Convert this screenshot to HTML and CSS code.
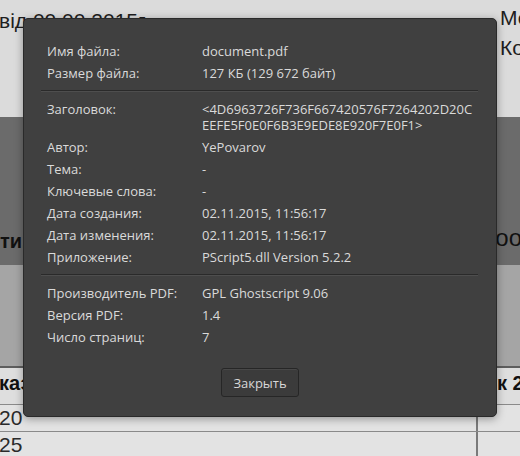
FILE: index.html
```html
<!DOCTYPE html>
<html lang="ru">
<head>
<meta charset="utf-8">
<title>Свойства документа</title>
<link rel="stylesheet" href="styles.css">
</head>
<body>
<div class="page">
  <div class="top">
    <div class="date">від 00.00.2015г.</div>
    <div class="topright"><div>Мо</div><div>Ко</div></div>
  </div>
  <div class="band">
    <span class="band-left">ти,</span>
    <span class="band-right">оо</span>
  </div>
  <div class="mid"></div>
  <div class="table">
    <div class="trow head"><div class="c1">каз</div><div class="c2">к 2</div></div>
    <div class="trow"><div class="c1">20</div><div class="c2"></div></div>
    <div class="trow"><div class="c1">25</div><div class="c2"></div></div>
  </div>
</div>

<div class="dialog">
  <div class="group">
    <div class="lbl">Имя файла:</div><div class="val">document.pdf</div>
    <div class="lbl">Размер файла:</div><div class="val">127 КБ (129 672 байт)</div>
  </div>
  <div class="sep"></div>
  <div class="group">
    <div class="lbl">Заголовок:</div><div class="val">&lt;4D6963726F736F667420576F7264202D20C<br>EEFE5F0E0F6B3E9EDE8E920F7E0F1&gt;</div>
    <div class="lbl">Автор:</div><div class="val">YePovarov</div>
    <div class="lbl">Тема:</div><div class="val">-</div>
    <div class="lbl">Ключевые слова:</div><div class="val">-</div>
    <div class="lbl">Дата создания:</div><div class="val">02.11.2015, 11:56:17</div>
    <div class="lbl">Дата изменения:</div><div class="val">02.11.2015, 11:56:17</div>
    <div class="lbl">Приложение:</div><div class="val">PScript5.dll Version 5.2.2</div>
  </div>
  <div class="sep"></div>
  <div class="group">
    <div class="lbl">Производитель PDF:</div><div class="val">GPL Ghostscript 9.06</div>
    <div class="lbl">Версия PDF:</div><div class="val">1.4</div>
    <div class="lbl">Число страниц:</div><div class="val">7</div>
  </div>
  <div class="actions"><button class="btn" type="button">Закрыть</button></div>
</div>
</body>
</html>
```
FILE: styles.css
```css
html, body {
  margin: 0;
  padding: 0;
  width: 520px;
  height: 456px;
  overflow: hidden;
  background: #dcdcdc;
}

.page {
  font-family: "Liberation Sans", Arial, sans-serif;
  color: #1e1e1e;
}

.top {
  height: 117px;
  background: #dbdbdb;
  display: grid;
  grid-template-columns: 1fr 20px;
  overflow: hidden;
}

.date {
  font-size: 21px;
  line-height: 30px;
  padding-top: 6px;
  margin-left: -1px;
  white-space: nowrap;
}

.topright {
  font-size: 21px;
  line-height: 30px;
  padding-top: 3px;
  white-space: nowrap;
  overflow: hidden;
}

.band {
  height: 148px;
  background: #6b6b6b;
  display: flex;
  justify-content: space-between;
  align-items: flex-end;
  padding-bottom: 12px;
  box-sizing: border-box;
  font-size: 20px;
  line-height: 24px;
  color: #111;
}

.band-left {
  font-weight: bold;
}

.band-right {
  font-size: 24px;
  margin-bottom: 3px;
  margin-right: -2px;
}

.mid {
  height: 101px;
  background: #a5a5a5;
  border-bottom: 2px solid #5e5e5e;
}

.table {
  background: #e3e3e3;
}

.trow {
  display: grid;
  grid-template-columns: 476px 1fr;
  height: 26px;
  border-bottom: 1px solid #8a8a8a;
  font-size: 21px;
  line-height: 26px;
  color: #2a2a2a;
}

.trow.head {
  height: 36px;
  line-height: 30px;
  background: #dedede;
  font-weight: bold;
  font-size: 20px;
  color: #111;
}

.c1 {
  margin-left: -1px;
  white-space: nowrap;
}

.c2 {
  border-left: 2px solid #7a7a7a;
  padding-left: 19px;
  white-space: nowrap;
  overflow: hidden;
}

.head .c2 {
  border-left: none;
  padding-left: 21px;
}

.dialog {
  position: absolute;
  left: 23px;
  top: 18px;
  width: 474px;
  box-sizing: border-box;
  background: #404040;
  border: 1px solid #2a2a2a;
  border-radius: 5px;
  box-shadow: 0 2px 8px rgba(0, 0, 0, 0.35);
  padding: 21px 18px 19px 17px;
  font-family: "Open Sans", "Noto Sans", sans-serif;
  font-size: 13px;
  color: #dadada;
}

.group {
  display: grid;
  grid-template-columns: 155px 1fr;
  padding-left: 6px;
  line-height: 16px;
}

.lbl, .val {
  padding: 3px 0;
  white-space: nowrap;
}

.sep {
  height: 0;
  border-top: 1px solid #2a2a2a;
  border-bottom: 1px solid #4e4e4e;
  margin: 6px 0;
}

.actions {
  margin-top: 20px;
  display: flex;
  justify-content: center;
}

.btn {
  width: 78px;
  height: 29px;
  box-sizing: border-box;
  background: #3b3b3b;
  border: 1px solid #262626;
  border-radius: 3px;
  box-shadow: inset 0 1px 0 rgba(255, 255, 255, 0.07);
  color: #d8d8d8;
  font-family: "Open Sans", "Noto Sans", sans-serif;
  font-size: 13px;
  padding: 0;
  margin-left: 1px;
}
```
